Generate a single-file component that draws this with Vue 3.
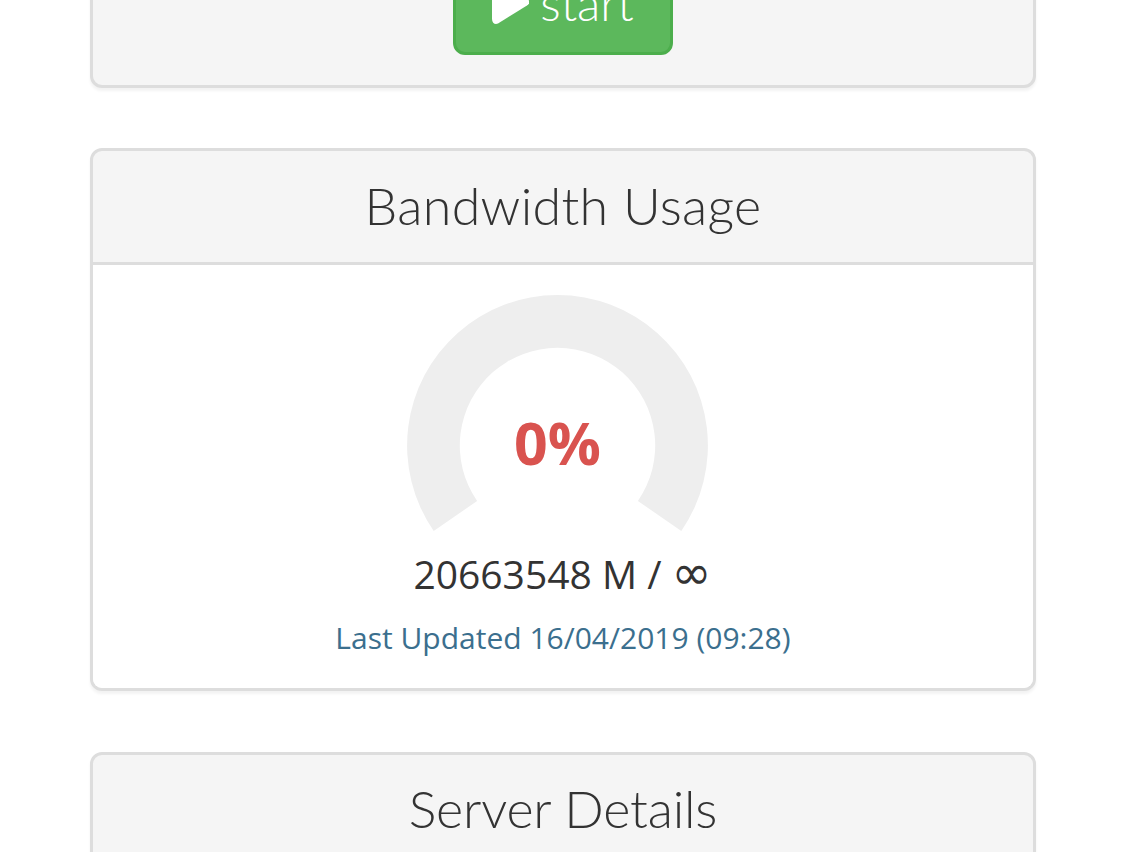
<script setup>
const cards = [{ title: 'Bandwidth Usage' }, { title: 'Server Details' }]
</script>

<template>
  <main class="page">
    <section class="card action-card">
      <button class="start-btn" type="button">
        <svg class="play" viewBox="0 0 37 44" aria-hidden="true">
          <path d="M0 5C0 1 3-1 6 .5L35 18.500C38 20.500 38 23.500 35 25.500L6 43.500C3 45 0 43 0 39Z" />
        </svg>
        <span>start</span>
      </button>
    </section>

    <section class="card usage-card">
      <h3 class="card-title with-line">{{ cards[0].title }}</h3>
      <div class="card-body">
        <div class="gauge">
          <svg viewBox="0 0 301 240" width="301" height="240" aria-hidden="true">
            <path class="gauge-track" d="M26.700 235.900A150.400 150.400 0 1 1 274.300 235.900L230.900 206A97.700 97.700 0 1 0 70.100 206Z" />
          </svg>
          <div class="percent">0%</div>
        </div>
        <p class="amount">20663548 M / <span class="infinity">∞</span></p>
        <p class="updated">Last Updated 16/04/2019 (09:28)</p>
      </div>
    </section>

    <section class="card details-card">
      <h3 class="card-title details-title">{{ cards[1].title }}</h3>
    </section>
  </main>
</template>

<style>
html, body { margin: 0; background: #fff; }
</style>

<style scoped>
.page {
  height: 852px;
  overflow: hidden;
  padding: 0 89px 0 90px;
  box-sizing: border-box;
  background: #fff;
  font-family: "Open Sans", "Liberation Sans", sans-serif;
  color: #333;
}
.card {
  border: 3px solid #ddd;
  border-radius: 12px;
  box-shadow: 0 3px 3px rgba(0, 0, 0, 0.05);
  background: #f5f5f5;
  overflow: hidden;
}
.action-card {
  height: 148px;
  margin-top: -60px;
  margin-bottom: 60px;
  box-sizing: border-box;
  display: flex;
  justify-content: center;
}
.start-btn {
  align-self: flex-start;
  box-sizing: border-box;
  width: 220px;
  height: 112px;
  padding: 6px 0 0;
  border: 3px solid #4cae4c;
  border-radius: 12px;
  background: #5cb85c;
  color: #fff;
  font-family: "Lato", sans-serif;
  font-weight: 300;
  font-size: 48px;
  display: flex;
  align-items: center;
  justify-content: center;
  gap: 11px;
}
.play { width: 37px; height: 44px; fill: #fff; }
.usage-card { margin-bottom: 61px; }
.card-title {
  margin: 0;
  height: 111px;
  font-family: "Lato", sans-serif;
  font-weight: 300;
  font-size: 52px;
  letter-spacing: 0.3px;
  line-height: 108px;
  text-align: center;
  color: #333;
}
.details-title { letter-spacing: -0.2px; line-height: 106px; }
.with-line { border-bottom: 3px solid #ddd; }
.card-body {
  height: 423px;
  box-sizing: border-box;
  background: #fff;
  padding-top: 30px;
  display: flex;
  flex-direction: column;
  align-items: center;
}
.gauge {
  position: relative;
  width: 301px;
  height: 240px;
  margin-right: 11px;
}
.gauge svg { display: block; }
.gauge-track { fill: #eee; }
.percent {
  position: absolute;
  left: 0;
  right: 0;
  top: 102px;
  text-align: center;
  font-size: 59px;
  line-height: 90px;
  font-weight: 700;
  color: #d9534f;
}
.amount {
  margin: 12px 1px 0 0;
  font-size: 39px;
  line-height: 54px;
  color: #333;
  display: flex;
  align-items: baseline;
  white-space: pre;
}
.infinity {
  font-family: "DejaVu Sans", sans-serif;
  font-size: 48px;
  line-height: 44px;
}
.updated {
  margin: 16px 0 0;
  font-size: 30px;
  line-height: 42px;
  color: #3b6f8e;
}
</style>
